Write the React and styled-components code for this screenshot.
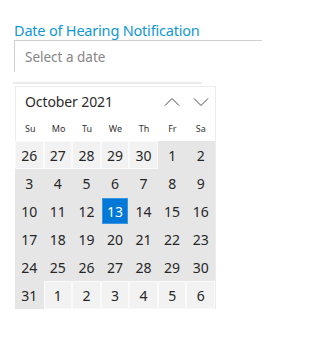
import React from "react";
import styled, { createGlobalStyle } from "styled-components";

const Global = createGlobalStyle`
  html, body { margin: 0; padding: 0; background: #ffffff; }
  body { font-family: "Noto Sans", "Open Sans", sans-serif; }
`;

const Page = styled.div`
  padding: 20px 0 0 14px;
  width: 331px;
  height: 340px;
  box-sizing: border-box;
`;

const Label = styled.div`
  font-size: 14.5px;
  line-height: 20px;
  color: #0f97d4;
  letter-spacing: -0.2px;
`;

const Input = styled.div`
  width: 248px;
  height: 32px;
  box-sizing: border-box;
  border-top: 1px solid #cfcfcf;
  border-left: 1px solid #cfcfcf;
  padding-left: 10px;
  display: flex;
  align-items: center;
  font-size: 13.5px;
  color: #858585;
`;

const Shadow = styled.div`
  margin: 10px 0 0 -1px;
  width: 189px;
  height: 2px;
  background: #ebebeb;
`;

const Calendar = styled.div`
  margin: 2px 0 0 1px;
  width: 201px;
  box-sizing: border-box;
  border: 1px solid #ececec;
  border-bottom: none;
`;

const Header = styled.div`
  height: 29px;
  display: flex;
  align-items: center;
  padding-left: 9px;
  padding-right: 0;
`;

const Month = styled.div`
  flex: 1;
  font-size: 14px;
  color: #2b2b2b;
  letter-spacing: -0.1px;
`;

const NavButton = styled.div`
  width: 28.5px;
  height: 24px;
  display: flex;
  align-items: center;
  justify-content: center;
`;

const Weekdays = styled.div`
  display: grid;
  grid-template-columns: repeat(7, 1fr);
  height: 25px;
  align-items: center;
`;

const Weekday = styled.div`
  text-align: center;
  font-size: 9px;
  color: #333;
`;

const Grid = styled.div`
  display: grid;
  grid-template-columns: repeat(7, 1fr);
  grid-auto-rows: 28px;
  margin-left: -1px;
  width: 200px;
`;

const Cell = styled.div`
  box-sizing: border-box;
  display: flex;
  align-items: center;
  justify-content: center;
  font-size: 14px;
  color: ${(p) => (p.$selected ? "#ffffff" : "#262626")};
  background: ${(p) =>
    p.$selected ? "#0078d7" : p.$outside ? "#f2f2f2" : "#e6e6e6"};
  border: 1px solid
    ${(p) => (p.$selected ? "#e6e6e6" : p.$outside ? "#fafafa" : "#e6e6e6")};
  box-shadow: ${(p) => (p.$selected ? "inset 0 0 0 1px #3b95e0" : "none")};
`;

const Chevron = ({ up }) => (
  <svg width="16" height="10" viewBox="0 0 16 10" fill="none">
    <polyline
      points={up ? "1,8.5 8,1.5 15,8.5" : "1,1.5 8,8.5 15,1.5"}
      stroke="#4a4a4a"
      strokeWidth="1"
    />
  </svg>
);

const days = [
  [26, true], [27, true], [28, true], [29, true], [30, true], [1], [2],
  [3], [4], [5], [6], [7], [8], [9],
  [10], [11], [12], [13], [14], [15], [16],
  [17], [18], [19], [20], [21], [22], [23],
  [24], [25], [26], [27], [28], [29], [30],
  [31], [1, true], [2, true], [3, true], [4, true], [5, true], [6, true],
];

export default function App() {
  return (
    <Page>
      <Global />
      <Label>Date of Hearing Notification</Label>
      <Input>Select a date</Input>
      <Shadow />
      <Calendar>
        <Header>
          <Month>October 2021</Month>
          <NavButton><Chevron up /></NavButton>
          <NavButton><Chevron /></NavButton>
        </Header>
        <Weekdays>
          {["Su", "Mo", "Tu", "We", "Th", "Fr", "Sa"].map((d) => (
            <Weekday key={d}>{d}</Weekday>
          ))}
        </Weekdays>
        <Grid>
          {days.map(([n, outside], i) => (
            <Cell key={i} $outside={outside} $selected={i === 17}>
              {n}
            </Cell>
          ))}
        </Grid>
      </Calendar>
    </Page>
  );
}
